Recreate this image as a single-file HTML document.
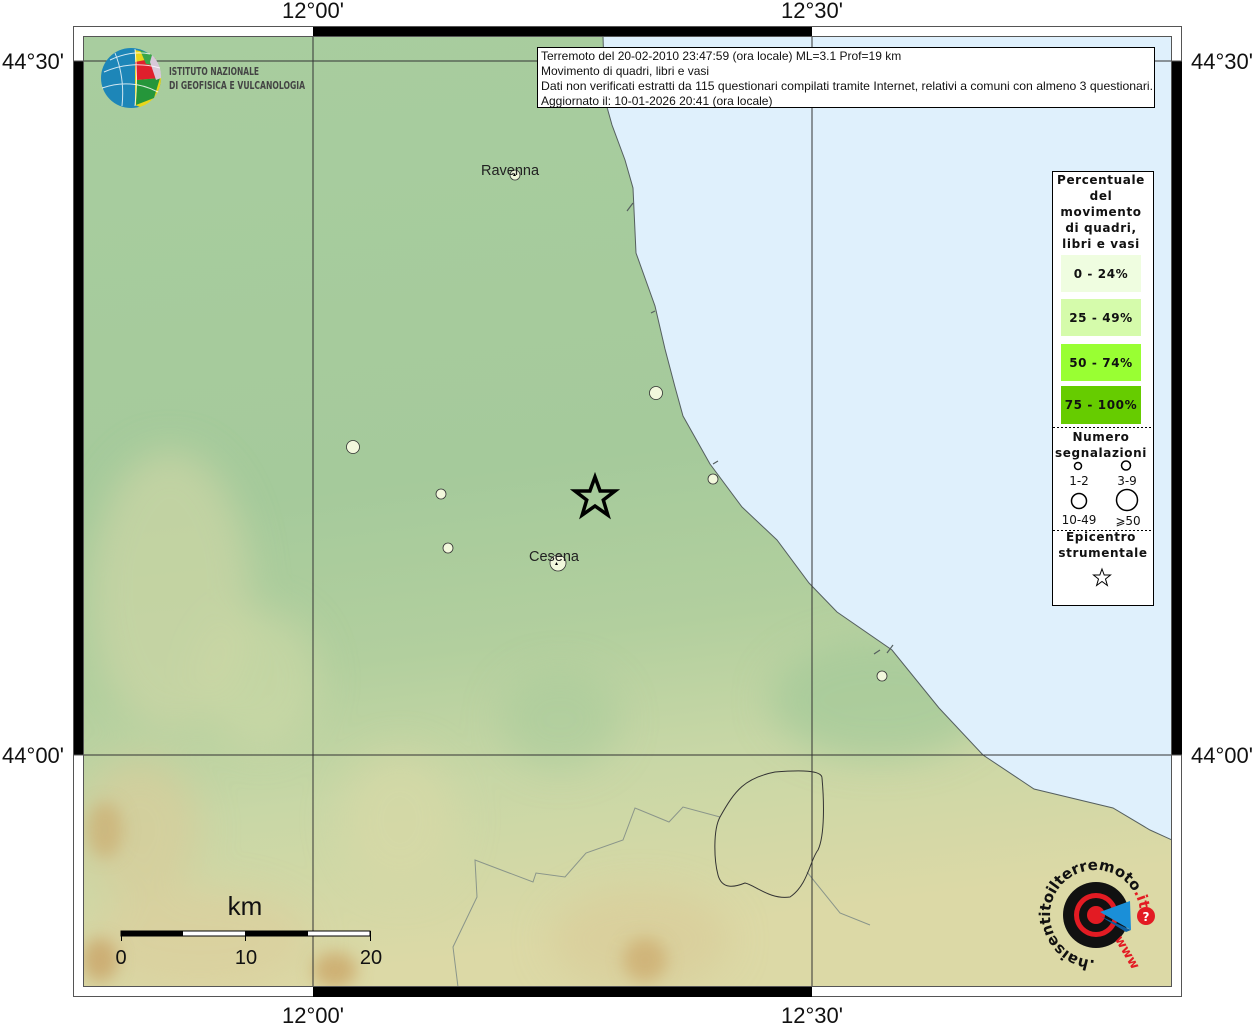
<!DOCTYPE html>
<html><head><meta charset="utf-8"><style>
html,body{margin:0;padding:0;background:#fff;}
svg{display:block;}
.ax{font-family:"Liberation Sans",sans-serif;font-size:22px;fill:#111;}
.lg{font-family:"DejaVu Sans",sans-serif;font-weight:bold;font-size:12px;fill:#111;text-anchor:middle;letter-spacing:0.6px;}
.lgn{font-family:"DejaVu Sans",sans-serif;font-size:12px;fill:#111;text-anchor:middle;}
.inf{font-family:"Liberation Sans",sans-serif;font-size:12px;fill:#111;}
</style></head><body>
<svg width="1255" height="1024" viewBox="0 0 1255 1024" xmlns="http://www.w3.org/2000/svg">
<defs>
<linearGradient id="land" x1="0" y1="0" x2="0.15" y2="1">
<stop offset="0" stop-color="#a8cd9f"/>
<stop offset="0.5" stop-color="#a5ca9b"/>
<stop offset="0.68" stop-color="#b2cf9e"/>
<stop offset="0.82" stop-color="#c8d7a6"/>
<stop offset="1" stop-color="#dcd9a6"/>
</linearGradient>
<filter id="bl" x="-50%" y="-50%" width="200%" height="200%"><feGaussianBlur stdDeviation="18"/></filter>
<filter id="bl2" x="-50%" y="-50%" width="200%" height="200%"><feGaussianBlur stdDeviation="8"/></filter>
<clipPath id="mapc"><rect x="83" y="36" width="1089" height="951"/></clipPath>
<path id="circ" d="M1095,960 A45,45 0 1,1 1095.1,960"/>
</defs>

<g clip-path="url(#mapc)">
<rect x="83" y="36" width="1089" height="951" fill="url(#land)"/>
<g filter="url(#bl)">
<ellipse cx="170" cy="590" rx="80" ry="140" fill="#cdd6a5" opacity="0.7"/>
<ellipse cx="260" cy="680" rx="60" ry="70" fill="#cfd8a6" opacity="0.6"/>
<ellipse cx="140" cy="830" rx="60" ry="70" fill="#d7cc9a" opacity="0.7"/>
<ellipse cx="200" cy="940" rx="110" ry="50" fill="#dccf9c" opacity="0.7"/>
<ellipse cx="400" cy="820" rx="60" ry="70" fill="#d9d8a6" opacity="0.6"/>
<ellipse cx="640" cy="940" rx="90" ry="50" fill="#d8cc98" opacity="0.7"/>
<ellipse cx="880" cy="700" rx="110" ry="60" fill="#9cc696" opacity="0.6"/>
<ellipse cx="560" cy="720" rx="60" ry="50" fill="#a6ca9a" opacity="0.5"/>
</g>
<g filter="url(#bl2)">
<ellipse cx="105" cy="830" rx="18" ry="28" fill="#c9a86a" opacity="0.6"/>
<ellipse cx="100" cy="960" rx="18" ry="22" fill="#c79e60" opacity="0.7"/>
<ellipse cx="335" cy="970" rx="22" ry="18" fill="#c9a060" opacity="0.7"/>
<ellipse cx="645" cy="960" rx="22" ry="22" fill="#c9a464" opacity="0.6"/>
</g>
<path d="M603,36 L605,100 L612,125 L625,160 L633,188 L636,253 L655,306 L665,349 L675,387 L683,416 L710,464 L742,507 L777,540 L809,583 L837,612 L892,650 L939,708 L983,755 L1034,789 L1113,808 L1150,830 L1172,840 L1172,36 Z" fill="#dff0fc" stroke="#555f5f" stroke-width="1"/>
<path d="M633,203 l-6,8 M655,311 l-4,2 M713,464 l5,-3 M880,650 l-6,4 M887,653 l6,-8" stroke="#555f5f" stroke-width="1.2" fill="none"/>
<path d="M458,987 L453,947 L477,897 L475,860 L533,882 L536,873 L565,877 L586,853 L623,840 L635,808 L669,822 L683,807 L720,817 M807,872 L840,913 L870,925" fill="none" stroke="#8a958a" stroke-width="1"/>
<path d="M720,817 C735,790 745,778 775,772 C800,770 822,770 822,778 C824,800 825,835 818,850 C810,860 808,885 790,897 C770,900 755,885 745,883 C735,887 722,890 718,875 C714,860 713,830 720,817 Z" fill="none" stroke="#333" stroke-width="1"/>
<path d="M313,36 V987 M812,36 V987 M83,61 H1172 M83,755 H1172" stroke="#333" stroke-width="1"/>
</g>

<rect x="73.5" y="26.5" width="1108" height="970" fill="none" stroke="#555" stroke-width="1"/>
<rect x="83.5" y="36.5" width="1088" height="950" fill="none" stroke="#555" stroke-width="1"/>
<rect x="313" y="27" width="499" height="9" fill="#000"/>
<rect x="313" y="987" width="499" height="10" fill="#000"/>
<rect x="74" y="61" width="9" height="694" fill="#000"/>
<rect x="1172" y="61" width="10" height="694" fill="#000"/>
<path d="M74,61 H83 M1172,61 H1182 M74,755 H83 M1172,755 H1182" stroke="#555"/>

<text class="ax" x="313" y="18" text-anchor="middle">12°00'</text>
<text class="ax" x="812" y="18" text-anchor="middle">12°30'</text>
<text class="ax" x="313" y="1023" text-anchor="middle">12°00'</text>
<text class="ax" x="812" y="1023" text-anchor="middle">12°30'</text>
<text class="ax" x="64" y="69" text-anchor="end">44°30'</text>
<text class="ax" x="64" y="763" text-anchor="end">44°00'</text>
<text class="ax" x="1191" y="69">44°30'</text>
<text class="ax" x="1191" y="763">44°00'</text>

<g>
<circle cx="131" cy="78" r="30" fill="#1d86b8"/>
<path d="M135,50 A30,30 0 0,1 161,78 A30,30 0 0,1 140,107 L135,105 Z" fill="#e8d61a"/>
<path d="M135,62 L155,58 L160,78 L137,80 Z" fill="#e01f2c"/>
<path d="M137,80 L160,78 L154,98 L136,105 Z" fill="#25963a"/>
<path d="M140,50 L152,55 L158,66 L146,64 Z" fill="#3aa64a"/>
<path d="M152,55 A30,30 0 0,1 161,78 L156,80 L150,62 Z" fill="#d8c8d8"/>
<path d="M104,72 Q131,60 160,68 M102,88 Q131,78 158,92 M115,53 Q125,78 122,106 M135,49 Q138,78 135,106 M110,60 Q131,50 150,54" stroke="#fff" stroke-width="1" fill="none" opacity="0.8"/>
<text x="169" y="75" font-family="'DejaVu Sans Condensed','DejaVu Sans',sans-serif" font-weight="bold" font-size="11" fill="#444" textLength="90" lengthAdjust="spacingAndGlyphs">ISTITUTO NAZIONALE</text>
<text x="169" y="89" font-family="'DejaVu Sans Condensed','DejaVu Sans',sans-serif" font-weight="bold" font-size="11" fill="#444" textLength="136" lengthAdjust="spacingAndGlyphs">DI GEOFISICA E VULCANOLOGIA</text>
</g>

<rect x="537.5" y="47.5" width="617" height="60" fill="#fff" stroke="#000"/>
<text class="inf" x="541" y="60">Terremoto del 20-02-2010 23:47:59 (ora locale) ML=3.1 Prof=19 km</text>
<text class="inf" x="541" y="75">Movimento di quadri, libri e vasi</text>
<text class="inf" x="541" y="90" textLength="612" lengthAdjust="spacingAndGlyphs">Dati non verificati estratti da 115 questionari compilati tramite Internet, relativi a comuni con almeno 3 questionari.</text>
<text class="inf" x="541" y="105">Aggiornato il: 10-01-2026 20:41 (ora locale)</text>

<g fill="#f2f8dc" stroke="#333" stroke-width="0.8">
<circle cx="515" cy="175" r="5"/>
<circle cx="656" cy="393" r="6.5"/>
<circle cx="353" cy="447" r="6.5"/>
<circle cx="441" cy="494" r="5"/>
<circle cx="448" cy="548" r="5"/>
<circle cx="558" cy="563" r="8"/>
<circle cx="713" cy="479" r="5"/>
<circle cx="882" cy="676" r="5"/>
</g>
<path d="M513,176 l3,0 l-1.5,-3 z M555,565 l3,0 l-1.5,-3 z" fill="#000"/>
<text x="481" y="175" font-family="'Liberation Sans',sans-serif" font-size="14.5" fill="#222">Ravenna</text>
<text x="529" y="561" font-family="'Liberation Sans',sans-serif" font-size="14.5" fill="#222">Cesena</text>
<path d="M595,477 L600.1,491 L615,491 L603.3,500 L607.8,515 L595,506 L582.2,515 L586.7,500 L575,491 L589.9,491 Z" fill="none" stroke="#000" stroke-width="3.5" stroke-linejoin="miter"/>

<rect x="1052.5" y="171.5" width="101" height="434" fill="#fff" stroke="#000"/>
<text class="lg" x="1101" y="184">Percentuale</text>
<text class="lg" x="1101" y="200">del</text>
<text class="lg" x="1101" y="216">movimento</text>
<text class="lg" x="1101" y="232">di quadri,</text>
<text class="lg" x="1101" y="248">libri e vasi</text>
<rect x="1061" y="255" width="80" height="37" fill="#effde0"/>
<rect x="1061" y="299" width="80" height="37" fill="#d5fbab"/>
<rect x="1061" y="344" width="80" height="37" fill="#99ff33"/>
<rect x="1061" y="386" width="80" height="38" fill="#66cc00"/>
<text class="lg" x="1101" y="278">0 - 24%</text>
<text class="lg" x="1101" y="322">25 - 49%</text>
<text class="lg" x="1101" y="367">50 - 74%</text>
<text class="lg" x="1101" y="409">75 - 100%</text>
<path d="M1053,427.5 H1153 M1053,530.5 H1153" stroke="#000" stroke-dasharray="2,2"/>
<text class="lg" x="1101" y="441">Numero</text>
<text class="lg" x="1101" y="457">segnalazioni</text>
<g fill="none" stroke="#000" stroke-width="1.5">
<circle cx="1078" cy="466" r="3.5"/>
<circle cx="1126" cy="465.5" r="4.5"/>
<circle cx="1079" cy="501" r="7.5"/>
<circle cx="1127" cy="500" r="10.5"/>
</g>
<text class="lgn" x="1079" y="485">1-2</text>
<text class="lgn" x="1127" y="485">3-9</text>
<text class="lgn" x="1079" y="524">10-49</text>
<text class="lgn" x="1128" y="525">⩾50</text>
<text class="lg" x="1101" y="541">Epicentro</text>
<text class="lg" x="1103" y="557">strumentale</text>
<path d="M1102,569 L1104.2,575 L1110.5,575 L1105.5,579 L1107.4,585.5 L1102,581.5 L1096.6,585.5 L1098.5,579 L1093.5,575 L1099.8,575 Z" fill="none" stroke="#000" stroke-width="1"/>

<text x="245" y="915" font-family="'Liberation Sans',sans-serif" font-size="26" fill="#111" text-anchor="middle">km</text>
<rect x="121" y="931" width="249" height="5" fill="#fff" stroke="#000" stroke-width="1"/>
<rect x="121" y="931" width="62" height="5" fill="#000"/>
<rect x="245" y="931" width="63" height="5" fill="#000"/>
<path d="M121.5,931 V941 M245.5,931 V941 M370.5,931 V941" stroke="#000"/>
<text x="121" y="964" font-family="'Liberation Sans',sans-serif" font-size="20" fill="#111" text-anchor="middle">0</text>
<text x="246" y="964" font-family="'Liberation Sans',sans-serif" font-size="20" fill="#111" text-anchor="middle">10</text>
<text x="371" y="964" font-family="'Liberation Sans',sans-serif" font-size="20" fill="#111" text-anchor="middle">20</text>

<g>
<circle cx="1096" cy="915" r="33" fill="#111"/>
<circle cx="1096" cy="915" r="22" fill="#e31b23"/>
<circle cx="1096" cy="915" r="17" fill="#111"/>
<circle cx="1096" cy="915" r="9" fill="#e31b23"/>
<path d="M1100,912 L1130,901 L1131,930 Z" fill="#1a8fd8"/>
<path d="M1100,916 L1131,930 L1126,932 Z" fill="#0e5fa0"/>
<circle cx="1146" cy="916" r="9" fill="#e31b23"/>
<text x="1146" y="921" font-family="'DejaVu Sans',sans-serif" font-weight="bold" font-size="12" fill="#fff" text-anchor="middle">?</text>
<text font-family="'DejaVu Sans',sans-serif" font-size="15" fill="#111" font-weight="bold">
<textPath href="#circ" startOffset="0">.hai<tspan>sentitoilterremoto</tspan><tspan fill="#e31b23">.it</tspan></textPath>
</text>
<text font-family="'DejaVu Sans',sans-serif" font-size="13" fill="#e31b23" font-weight="bold" transform="rotate(60 1128 952)"><tspan x="1110" y="957">www</tspan></text>
</g>
</svg>
</body></html>
